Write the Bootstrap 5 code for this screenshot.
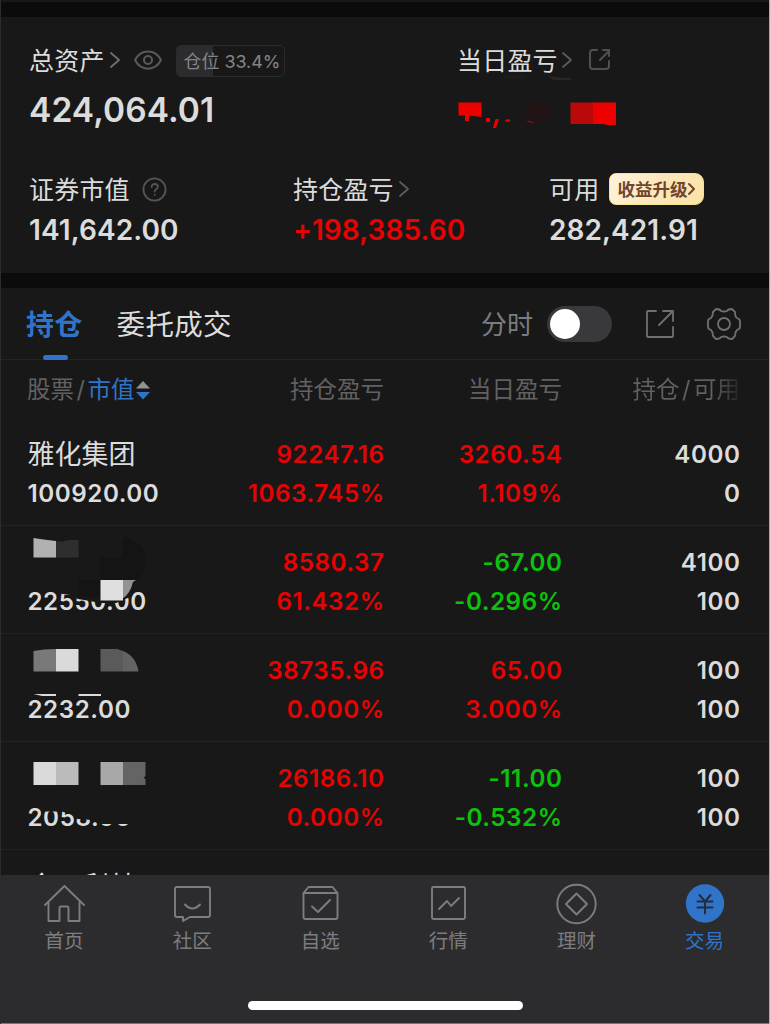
<!DOCTYPE html>
<html lang="zh-CN" data-bs-theme="dark">
<head>
<meta charset="utf-8">
<meta name="viewport" content="width=device-width, initial-scale=1">
<title>交易</title>
<link href="https://cdn.jsdelivr.net/npm/bootstrap@5.3.0/dist/css/bootstrap.min.css" rel="stylesheet">
<style>
:root{--ink:#dcdcdc;--panel:#181818;--blue:#2f74c8;--up:#e60303;--down:#0cc20c}
body{background:var(--panel);color:var(--ink);font-family:Inter,"Noto Sans CJK SC",sans-serif;margin:0}
svg{display:block;flex:none}
.line-icon{fill:none;stroke:currentColor;stroke-linecap:round;stroke-linejoin:round}
.screen{width:770px;height:1024px;border-left:1px solid #2b2c2e;border-right:1px solid #a9aba9}
.gap-band{height:15px;background:#0b0b0b;flex:none}
.summary{height:256px;padding:26px 0 0 28px;flex:none}
.sum-a{display:grid;grid-template-columns:428px 1fr;height:129px}
.sum-b{display:grid;grid-template-columns:264px 256px 1fr}
.lbl{font-size:25px;line-height:35px;height:36px;letter-spacing:.2px;font-weight:400;white-space:nowrap}
.lbl .line-icon{margin-top:-2px}
.total{font-size:33.5px;font-weight:600;line-height:40px;margin-top:11px;letter-spacing:.1px}
.amount{font-size:28px;font-weight:600;line-height:36px;margin-top:4px;letter-spacing:.08px}
.up{color:var(--up)}.down{color:var(--down)}
.ratio{width:109px;height:32px;border:1px solid #2a2a2b;border-radius:5px;background:linear-gradient(90deg,#2c2c2f 36px,transparent 36px);font-size:17.9px;line-height:32px;color:#858585;letter-spacing:0;margin:-1px 0 0 13px;padding-left:7px}
.upgrade{width:95px;height:32px;border-radius:7px 9px 9px 7px;border:1.5px solid #f4e48c;background:linear-gradient(115deg,#fff3dc,#fde7ba 50%,#fbe3a8);color:#70452d;font-size:17.5px;font-weight:700;letter-spacing:0;margin:-2px 0 0 10px;padding-left:7px}
.upgrade .line-icon{margin-top:0}
.tabs{height:72px;border-bottom:1px solid #232323;flex:none;padding:0 27px 0 25px}
.tab-item{font-size:28.5px;line-height:70px;padding-top:2px;letter-spacing:.3px;position:relative}
.tab-item.on{color:var(--blue);font-weight:600;font-size:28px}
.tab-item.on::after{content:"";position:absolute;left:17px;bottom:0;width:25px;height:5px;border-radius:3px;background:var(--blue)}
.toggle{width:65px;height:36px;border-radius:18px;background:#39393b;padding:3px}
.toggle i{display:block;width:30px;height:30px;border-radius:50%;background:#fff}
.grid4{display:grid;grid-template-columns:178px 178px 178px 178px;padding-left:27px}
.heads{height:58px;font-size:23.5px;line-height:58px;padding-top:1px;color:#616161;flex:none}
.slash{padding:0 2.5px}
.fade-end{background:linear-gradient(90deg,#616161 75%,#222);-webkit-background-clip:text;background-clip:text;color:transparent}
.stock{height:108px;padding-top:17px;border-bottom:1px solid #222;position:relative;flex:none;font-size:24.2px;font-weight:600;line-height:39px;letter-spacing:.55px}
.stock .name{font-size:27px;font-weight:400;letter-spacing:0}
.stock .first-col{margin-left:-.5px}
.stock .text-end{margin-right:-.5px}
.stock .mosaic{position:absolute;left:-1px;top:0}
.list-view{height:515px;overflow:hidden;flex:none}
.dock{height:149px;background:#2c2c2e;border-bottom:1px solid #77787a;flex:none;position:relative;color:#7d7d81}
.dock-grid{display:grid;grid-template-columns:repeat(6,128.1px);margin-left:-1px;padding-top:8px}
.dock-item{font-size:19.5px;line-height:28px;text-align:center}
.dock-item svg{margin:0 auto 2px}
.home-bar{width:275px;height:9px;border-radius:5px;background:#fff;position:absolute;left:247px;top:126px}
</style>
</head>
<body>
<div class="screen d-flex flex-column overflow-hidden">
  <div style="height:2px" class="flex-shrink-0"></div>
  <div class="gap-band"></div>
  <section class="summary">
    <div class="sum-a">
      <div>
        <div class="lbl d-flex align-items-center">总资产
          <svg class="line-icon" width="14" height="20" viewBox="0 0 14 20" color="#707070" stroke-width="1.8" style="margin-left:3px"><path d="M3 3l8 7-8 7"/></svg>
          <svg class="line-icon" width="30" height="22" viewBox="0 0 30 22" color="#5a5a5a" stroke-width="2" style="margin-left:11px"><path d="M2 11C8-.5 22-.5 28 11 22 22.500 8 22.500 2 11z"/><circle cx="15" cy="11" r="4"/></svg>
          <span class="ratio">仓位 33.4%</span>
        </div>
        <div class="total">424,064.01</div>
      </div>
      <div>
        <div class="lbl d-flex align-items-center">当日盈亏
          <svg class="line-icon" width="14" height="20" viewBox="0 0 14 20" color="#5c5c5c" stroke-width="1.8" style="margin-left:2px"><path d="M3 3l8 7-8 7"/></svg>
          <svg class="line-icon" width="24" height="24" viewBox="0 0 24 24" color="#505050" stroke-width="2" style="margin-left:14px"><path d="M9 2H5Q2 2 2 5v13q0 3 3 3h13q3 0 3-3v-5M12 12l9-9M15 2h6v6"/></svg>
        </div>
        <svg width="170" height="60" viewBox="457 75 170 60" style="margin-top:-4px"><path fill="#1b1b1b" d="M504 75h22v4h-22z"/><path fill="#262626" d="M548 76q12 2 23 2v2h-18z"/><g fill="#ec0000"><path d="M458.500 102.500h23V117l-12.500-1.500v5.500h-4v-5.500h-6.500zM486 118h4v4h-4zM495.500 119h3.500l-3 9h-3zM505 120.500q3-2 5-1v2h-5zM526 120.500q5 1.500 11 1-6 2.500-11-1zM593 102.500h23V125h-9l-4-1h-10z"/></g><path fill="#b90909" d="M570.500 102.500H593V124h-22.500z"/><path fill="#221415" d="M526 102.500h22.500V122h-11q-6 0-11.500-2z"/></svg>
      </div>
    </div>
    <div class="sum-b">
      <div>
        <div class="lbl d-flex align-items-center">证券市值
          <svg class="line-icon" width="25" height="25" viewBox="0 0 26 26" color="#555" stroke-width="1.900" style="margin-left:12px"><circle cx="13" cy="13" r="11.500"/><path d="M10 10.500c0-4.500 6.500-4 6.500-.3 0 2.300-3.300 2.500-3.300 5M13.200 18.300v.2"/></svg>
        </div>
        <div class="amount">141,642.00</div>
      </div>
      <div>
        <div class="lbl d-flex align-items-center">持仓盈亏
          <svg class="line-icon" width="14" height="20" viewBox="0 0 14 20" color="#5c5c5c" stroke-width="1.800" style="margin-left:3px"><path d="M3 3l8 7-8 7"/></svg>
        </div>
        <div class="amount up">+198,385.60</div>
      </div>
      <div>
        <div class="lbl d-flex align-items-center">可用
          <span class="upgrade d-flex align-items-center">收益升级<svg class="line-icon" width="9" height="14" viewBox="0 0 9 14" stroke-width="2"><path d="M2 2l5 5-5 5"/></svg></span>
        </div>
        <div class="amount">282,421.91</div>
      </div>
    </div>
  </section>
  <div class="gap-band"></div>
  <nav class="tabs d-flex align-items-center">
    <div class="tab-item on">持仓</div>
    <div class="tab-item" style="margin-left:34px">委托成交</div>
    <div class="ms-auto" style="font-size:26px;color:#7c7c80;padding-top:2px">分时</div>
    <div class="toggle" style="margin-left:14px"><i></i></div>
    <svg class="line-icon" width="30" height="30" viewBox="0 0 30 30" color="#707073" stroke-width="1.800" style="margin-left:33px"><path d="M11 2H3q-1 0-1 1v24q0 1 1 1h24q1 0 1-1V18M14 16L28 2M18 2h10v10"/></svg>
    <svg class="line-icon" width="36" height="36" viewBox="0 0 36 36" color="#707073" stroke-width="1.800" style="margin-left:31px"><circle cx="18" cy="18" r="6"/><path d="M10 3Q14 3 15 5Q18 6 21 5Q22 3 26 3L29 6Q29 11 31 12Q34 13 34 15V21Q34 23 31 24Q29 26 29 30L26 33Q22 33 21 31Q18 30 15 31Q14 33 10 33L7 30Q7 26 5 24Q2 23 2 21V15Q2 13 5 12Q7 10 7 6Z"/></svg>
  </nav>
  <div class="list-view d-flex flex-column">
    <div class="grid4 heads">
      <div class="d-flex align-items-center" style="margin-left:-1px">股票<span class="slash">/</span><span style="color:var(--blue)">市值</span><svg width="14" height="20" viewBox="0 0 14 20" style="margin-left:2px"><path fill="#929292" d="M0 8.500L7 1l7 7.500z"/><path fill="#2f74c8" d="M0 12h14l-7 7.500z"/></svg></div>
      <div class="text-end">持仓盈亏</div><div class="text-end">当日盈亏</div><div class="text-end"><span class="fade-end">持仓<span class="slash">/</span>可用</span></div>
    </div>
    <div class="grid4 stock">
      <div class="first-col"><div class="name">雅化集团</div>100920.00</div>
      <div class="text-end up">92247.16<br>1063.745%</div><div class="text-end up">3260.54<br>1.109%</div><div class="text-end">4000<br>0</div>
    </div>
    <div class="grid4 stock">
      <div class="first-col"><div class="name">&nbsp;</div>22550.00</div>
      <div class="text-end up">8580.37<br>61.432%</div><div class="text-end down">-67.00<br>-0.296%</div><div class="text-end">4100<br>100</div>
      <svg class="mosaic" width="180" height="107" viewBox="0 526 180 107"><path fill="#181818" d="M56 586h84l-10 11-14 6h-16l-10-2-12-2-8-4-14-2z"/><path fill="#b1b1b1" d="M33.500 538l10 1.500 12.500 1.500v16.500H33.500z"/><path fill="#2e2e2e" d="M56 541l6 .7 7-1.700h9.500v17.500H56z"/><path fill="#141414" d="M123 537q23 2 22.500 30-4 12-12 13h-33v17.500h-22V580h22v-22H123z"/><path fill="#dfdfdf" d="M100.500 580H123v20.500h-22.500z"/><path fill="#939393" d="M123 580h13l-3 2q-3 12-10 16z"/></svg>
    </div>
    <div class="grid4 stock">
      <div class="first-col"><div class="name">&nbsp;</div>2232.00</div>
      <div class="text-end up">38735.96<br>0.000%</div><div class="text-end up">65.00<br>3.000%</div><div class="text-end">100<br>100</div>
      <svg class="mosaic" width="180" height="107" viewBox="0 634 180 107"><path fill="#797979" d="M33.500 651q10-2 22.500-2v22.500H33.500z"/><path fill="#dadada" d="M56 649h22.500v22.500H56zM33.500 694H56v2H42zM78.500 694H101v2H78.500z"/><path fill="#5a5a5a" d="M100.500 649H117l6 2v20.500h-22.500z"/><path fill="#636363" d="M123 651q13 5 15.500 20.500H123z"/></svg>
    </div>
    <div class="grid4 stock">
      <div class="first-col"><div class="name">&nbsp;</div>2058.00</div>
      <div class="text-end up">26186.10<br>0.000%</div><div class="text-end down">-11.00<br>-0.532%</div><div class="text-end">100<br>100</div>
      <svg class="mosaic" width="180" height="107" viewBox="0 742 180 107"><path fill="#181818" d="M42 800h94v24h-36l-4-3-4-1-14-1-5-4-11-3.500H45L42 808z"/><path fill="#dadada" d="M33.500 762H56v23H33.500z"/><path fill="#bbb" d="M56 762h22.500v23H56z"/><path fill="#a8a8a8" d="M100.500 762H123v23h-22.500z"/><path fill="#646464" d="M123 762h22.500v14l-2 2 2 1v6H123z"/></svg>
    </div>
    <div class="grid4 stock border-0" style="padding-top:17px"><div><div class="name">今日利林</div></div></div>
  </div>
  <footer class="dock">
    <div class="dock-grid">
      <div class="dock-item"><svg class="line-icon" width="42" height="42" viewBox="0 0 42 42" stroke-width="1.900"><path d="M2 22L21.500 3 41 22M5.500 19.500V38h11V25q0-1.500 1.500-1.500h6q1.500 0 1.500 1.500v13h11V19.500"/></svg>首页</div>
      <div class="dock-item"><svg class="line-icon" width="42" height="42" viewBox="0 0 42 42" stroke-width="1.900"><path d="M6 4h31q2 0 2 2v26q0 2-2 2H19l-7 4v-4H6q-2 0-2-2V6q0-2 2-2z"/><path d="M14 21.500q7.500 8 15 0"/></svg>社区</div>
      <div class="dock-item"><svg class="line-icon" width="42" height="42" viewBox="0 0 42 42" stroke-width="1.900"><path d="M4.500 10l5-6h24l5 6v24q0 2-2 2h-30q-2 0-2-2zM4.500 10h34M13 23.500l6 5.500 12-12"/></svg>自选</div>
      <div class="dock-item"><svg class="line-icon" width="42" height="42" viewBox="0 0 42 42" stroke-width="1.900"><rect x="5" y="4" width="33" height="32" rx="1.500"/><path d="M12 26l8-8 4 5 8-8"/></svg>行情</div>
      <div class="dock-item"><svg class="line-icon" width="42" height="42" viewBox="0 0 42 42" stroke-width="1.900"><circle cx="21.500" cy="21" r="19.200"/><path d="M21.500 10.500L32 21 21.500 31.500 11 21z"/></svg>理财</div>
      <div class="dock-item" style="color:var(--blue)"><svg class="line-icon" width="42" height="42" viewBox="0 0 42 42"><circle cx="21" cy="20.500" r="19.200" fill="#2f74c8" stroke="none"/><path stroke="#242d3a" stroke-width="2" d="M15.500 12L21 18.500l5.500-6.500M13.500 18.500h15M13.500 24.500h15M21 18.500v12"/></svg>交易</div>
    </div>
    <div class="home-bar"></div>
  </footer>
</div>
<script src="https://cdn.jsdelivr.net/npm/bootstrap@5.3.0/dist/js/bootstrap.bundle.min.js"></script>
</body>
</html>
